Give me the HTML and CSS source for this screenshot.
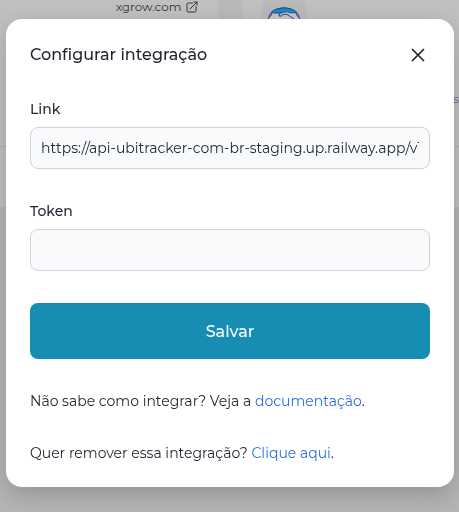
FILE: index.html
```html
<!DOCTYPE html>
<html lang="pt-BR">
<head>
    <meta charset="UTF-8">
    <meta name="viewport" content="width=device-width, initial-scale=1.0">
    <title>Configurar integração</title>
    <link rel="stylesheet" href="styles.css">
</head>
<body>
    <main class="cards">
        <article class="card">
            <div class="card-body">
                <a class="site-link" href="#">xgrow.com
                    <svg width="12" height="12" viewBox="0 0 12 12" fill="none" stroke="currentColor" stroke-linecap="round" stroke-linejoin="round">
                        <path d="M6.500 2H2.200Q1 2 1 3.200v6.600Q1 11 2.200 11h6.600Q10 11 10 9.800V5.500M4 8l7-7M8 1h3v3"/>
                    </svg>
                </a>
            </div>
            <div class="card-footer"></div>
        </article>
        <article class="card">
            <div class="card-body">
                <div class="brand">
                    <svg width="34" height="24" viewBox="0 0 34 24">
                        <ellipse cx="17" cy="12" rx="15.500" ry="11.200" fill="#c3c6ca" stroke="#24408c"/>
                        <path d="M4 5.500C9-.5 25-.5 30 5.500q-4 .6-7 .3-3.500-1.800-6-.6l-3 .8q-5 .8-10-.5z" fill="#168fbd" stroke="#24408c" stroke-width=".8"/>
                        <path d="M2 10q3-1 3-4M32 10q-3-1-3-4M12 9q2 1 4-1.500 3-1 5 .5l6 4M12 9q-1-2 3-4" fill="none" stroke="#24408c"/>
                    </svg>
                </div>
                <p class="card-text">s</p>
            </div>
            <div class="card-footer"></div>
        </article>
    </main>

    <div class="overlay">
        <section class="modal" role="dialog" aria-modal="true" aria-labelledby="modalTitle">
            <header class="modal-header">
                <h1 id="modalTitle">Configurar integração</h1>
                <button type="button" class="close-btn" aria-label="Fechar">
                    <svg width="14" height="14" viewBox="0 0 14 14" fill="none" stroke="currentColor" stroke-width="1.700">
                        <path d="M1 1l12 12M13 1L1 13"/>
                    </svg>
                </button>
            </header>
            <form>
                <div class="form-group">
                    <label for="link">Link</label>
                    <input type="text" id="link" name="link" value="https://api-ubitracker-com-br-staging.up.railway.app/v1">
                </div>
                <div class="form-group">
                    <label for="token">Token</label>
                    <input type="text" id="token" name="token">
                </div>
                <button type="submit" class="save-btn">Salvar</button>
            </form>
            <p class="help">Não sabe como integrar? Veja a <a href="#">documentação</a>.</p>
            <p class="help">Quer remover essa integração? <a href="#">Clique aqui</a>.</p>
        </section>
    </div>
</body>
</html>
```
FILE: styles.css
```css
* {
    box-sizing: border-box;
}
body {
    margin: 0;
    min-height: 100vh;
    overflow: hidden;
    background-color: #b5b5b5;
    color: #1f2430;
    font-family: Montserrat, Inter, "Liberation Sans", sans-serif;
    font-size: 14px;
    line-height: 20px;
}
.cards {
    display: grid;
    grid-template-columns: 1fr 1fr;
    gap: 24px;
    background-color: #b9b9b9;
}
.card {
    background-color: #c0c0c0;
}
.card-body {
    height: 146px;
}
.card-footer {
    height: 61px;
    border-top: 1px solid #adadad;
}
.site-link {
    display: flex;
    align-items: center;
    justify-content: flex-end;
    gap: 4px;
    padding: 0 20px;
    height: 14px;
    color: #303641;
    font-size: 12px;
    text-decoration: none;
}
.brand {
    display: flex;
    align-items: flex-end;
    justify-content: center;
    width: 44px;
    height: 43px;
    margin-left: 20px;
    padding-bottom: 12px;
    border-radius: 4px;
    background-color: #b9b9b9;
}
.card-text {
    margin: 0;
    padding-top: 46px;
    color: #6b7280;
    font-size: 12px;
    text-align: right;
}
.overlay {
    position: fixed;
    inset: 0;
    display: flex;
    align-items: center;
    justify-content: center;
    padding: 0 5px 6px 6px;
}
.modal {
    width: 100%;
    max-width: 448px;
    padding: 24px;
    border-radius: 16px;
    background-color: #fff;
    box-shadow: 0 8px 24px rgba(0, 20, 10, 0.2);
}
.modal-header {
    display: flex;
    align-items: center;
    justify-content: space-between;
    margin-bottom: 32px;
}
.modal-header h1 {
    margin: 0;
    font-size: 16px;
    font-weight: 500;
    line-height: 24px;
}
.close-btn {
    display: flex;
    padding: 5px;
    border: none;
    background: none;
    color: #1f2430;
    cursor: pointer;
}
.form-group {
    margin-bottom: 32px;
}
.form-group label {
    display: block;
    margin-bottom: 8px;
    font-weight: 500;
}
.form-group input {
    display: block;
    width: 100%;
    height: 42px;
    padding: 0 10px;
    border: 1px solid #d1d5db;
    border-radius: 8px;
    background-color: #f9fafb;
    color: #1f2430;
    font-family: inherit;
    font-size: 14px;
}
.save-btn {
    display: block;
    width: 100%;
    height: 56px;
    border: none;
    border-radius: 8px;
    background-color: #188db3;
    color: #fff;
    font-family: inherit;
    font-size: 16px;
    font-weight: 500;
    cursor: pointer;
}
.help {
    margin: 32px 0 0;
}
.help a {
    color: #2f6fe4;
    text-decoration: none;
}
```
